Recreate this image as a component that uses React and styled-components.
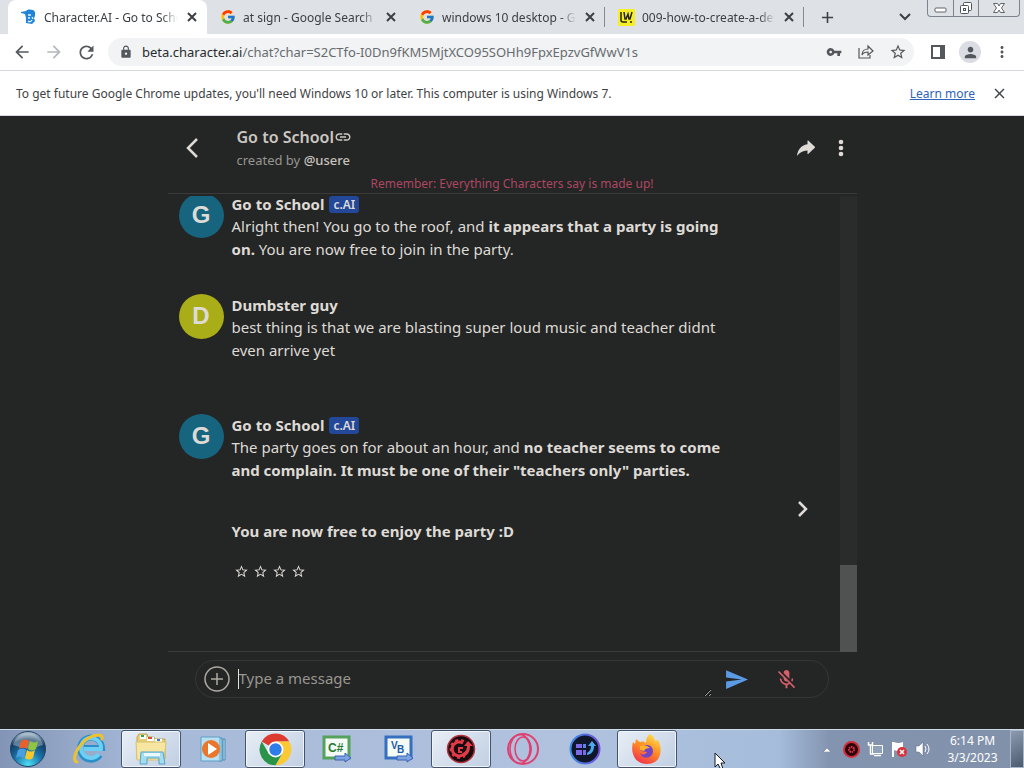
import React from 'react'
import styled, { createGlobalStyle } from 'styled-components'
import { FcGoogle } from 'react-icons/fc'
import {
  MdAdd,
  MdArrowBack,
  MdArrowForward,
  MdClose,
  MdLink,
  MdLock,
  MdMicOff,
  MdMoreVert,
  MdPerson,
  MdRefresh,
  MdSend,
  MdStarBorder,
  MdVpnKey,
} from 'react-icons/md'
import { IoIosShareAlt } from 'react-icons/io'

const GlobalStyle = createGlobalStyle`
  * {
    box-sizing: border-box;
  }
  body {
    margin: 0;
    font-family: 'Noto Sans', 'Open Sans', sans-serif;
    font-size: 12px;
    background: #242525;
  }
  button {
    padding: 0;
    border: 0;
    background: none;
    color: inherit;
    font: inherit;
    cursor: pointer;
  }
  svg {
    display: block;
    flex: none;
  }
`

const tabs = [
  { title: 'Character.AI - Go to School', icon: 'character', active: true },
  { title: 'at sign - Google Search', icon: 'google' },
  { title: 'windows 10 desktop - Google Search', icon: 'google' },
  { title: '009-how-to-create-a-desktop', icon: 'wiki' },
]

const messages = [
  {
    id: 1,
    name: 'Go to School',
    bot: true,
    gap: 33,
    text: [
      <>
        Alright then! You go to the roof, and{' '}
        <b>it appears that a party is going on.</b> You are now free to join in
        the party.
      </>,
    ],
  },
  {
    id: 2,
    name: 'Dumbster guy',
    gap: 52,
    text: [
      'best thing is that we are blasting super loud music and teacher didnt even arrive yet',
    ],
  },
  {
    id: 3,
    name: 'Go to School',
    bot: true,
    rated: true,
    gap: 48,
    text: [
      <>
        The party goes on for about an hour, and{' '}
        <b>
          no teacher seems to come and complain. It must be one of their
          "teachers only" parties.
        </b>
      </>,
      <b>You are now free to enjoy the party :D</b>,
    ],
  },
]

const CharacterIcon = () => (
  <svg width='16' height='16' viewBox='0 0 16 16'>
    <path
      d='M0 3 5 2C7 0 12 0 14 3v4l-1 2 1 3-3 3-6-1V9L4 5 0 4z'
      fill='#2184d8'
    />
    <path
      d='M7 6h3M7 9h2M11 8l1 2M7 12c1 1 3 1 4-1'
      stroke='#e9f5ff'
      strokeWidth='1.3'
      fill='none'
    />
  </svg>
)

const WikiIcon = () => (
  <svg width='17' height='17' viewBox='0 0 17 17'>
    <rect width='17' height='17' rx='1' fill='#f7ee2a' />
    <path
      d='M3 3v8q0 2 2 2h4M6 3l1 7h1l2-5 1 5h1l2-7'
      stroke='#25240c'
      strokeWidth='1.5'
      fill='none'
    />
    <circle cx='13' cy='13' r='1' fill='#25240c' />
  </svg>
)

const favicons = {
  character: <CharacterIcon />,
  google: <FcGoogle size={16} />,
  wiki: <WikiIcon />,
}

const Chevron = ({ points, width, height, weight = 2.5 }) => (
  <svg
    width={width}
    height={height}
    viewBox={`0 0 ${width} ${height}`}
    fill='none'
    stroke='currentColor'
    strokeWidth={weight}
  >
    <path d={points} />
  </svg>
)

const StartIcon = () => (
  <svg width='38' height='38' viewBox='0 0 38 38'>
    <defs>
      <radialGradient id='orb' cx='.5' cy='.95' r='.9'>
        <stop offset='0' stopColor='#4fe0f5' />
        <stop offset='.45' stopColor='#1b74ab' />
        <stop offset='.8' stopColor='#123c62' />
        <stop offset='1' stopColor='#9eb4c8' />
      </radialGradient>
    </defs>
    <circle cx='19' cy='19' r='17.5' fill='url(#orb)' stroke='#26435f' />
    <path d='M4 15a15.5 15.5 0 0 1 30 0q-15 6-30 0z' fill='#fff' opacity='.32' />
    <path d='M12 11q4-3 8 0l-2 8q-4-3-8 0z' fill='#e9602d' />
    <path d='M21 11q4 3 8 0l-2 8q-4 3-8 0z' fill='#8fc53f' />
    <path d='M9 20q5-3 8 0l-2 8q-4-3-8 0z' fill='#4a9fe0' />
    <path d='M18 20q4 3 8 0l-2 8q-4 3-8 0z' fill='#f8c72d' />
  </svg>
)

const ExplorerEIcon = () => (
  <svg width='34' height='34' viewBox='0 0 34 34'>
    <path
      d='M28 23a11 11 0 1 1 2-7H12'
      fill='none'
      stroke='#2b8fc9'
      strokeWidth='6'
    />
    <path
      d='M27 22a10 10 0 1 1 2-5H12'
      fill='none'
      stroke='#6dcff3'
      strokeWidth='4'
    />
    <path
      d='M5 30C-3 28 10 3 27 3q4 0 3 4'
      fill='none'
      stroke='#edc12f'
      strokeWidth='3'
      strokeLinecap='round'
    />
  </svg>
)

const FolderIcon = () => (
  <svg width='34' height='32' viewBox='0 0 34 32'>
    <path d='M3 4 5 1h8l1 3h6l1 2h10v20H3z' fill='#e6cf78' stroke='#bfa653' />
    <path d='M6 2h6v4H6z' fill='#fff' />
    <path d='M7 2h3v2H7z' fill='#36a34b' />
    <path d='M13 4h7v4h-7z' fill='#fff' />
    <path d='M14 4h4v2h-4z' fill='#d84b35' />
    <path d='M21 6h7v3h-7z' fill='#fff' />
    <path d='M23 6h3v2h-3z' fill='#4977c7' />
    <path d='M2 9h30l-2 18H3z' fill='#f6e6a1' stroke='#d9c273' />
    <path d='M7 19h22l2 12h-6v-6H13v6H6z' fill='#a5dcef' stroke='#55a5ca' />
    <path d='M10 20h16v3H10z' fill='#e9f9ff' />
  </svg>
)

const PlayerIcon = () => (
  <svg width='28' height='26' viewBox='0 0 28 26'>
    <path d='M20 2h3v23h-3zM24 3h2v21h-2z' fill='#bde3f5' stroke='#488db5' />
    <path d='M2 1h19v24H2z' fill='#b9dff2' stroke='#5f9fc4' />
    <circle cx='12' cy='13' r='9' fill='#e9762a' />
    <path d='M9 7v12l9-6z' fill='#fff' />
  </svg>
)

const ChromeIcon = () => (
  <svg width='33' height='33' viewBox='0 0 48 48'>
    <path d='M24 24 4 12.5A23 23 0 0 1 44 12.5H24z' fill='#de3b30' />
    <path d='M24 12.5h20A23 23 0 0 1 24 47l10-17.5z' fill='#fcc934' />
    <path d='M24 47A23 23 0 0 1 4 12.5l10 17.3L34 29.5z' fill='#2a9348' />
    <circle cx='24' cy='24' r='11.5' fill='#fff' />
    <circle cx='24' cy='24' r='9' fill='#2f7de8' />
  </svg>
)

const CodeIcon = ({ edge, ink, children }) => (
  <svg width='30' height='28' viewBox='0 0 30 28'>
    <rect x='2' y='2' width='25' height='21' fill='#f4faf5' stroke={edge} strokeWidth='3' />
    <g
      fontFamily='Liberation Sans, sans-serif'
      fontSize='12'
      fontWeight='bold'
      fill={ink}
    >
      {children}
    </g>
    <path d='M13 21h10v-3l6 5-6 4v-2H13z' fill='#7da3e4' stroke='#3c63b0' />
  </svg>
)

const RedGearIcon = () => (
  <svg width='30' height='30' viewBox='0 0 30 30'>
    <circle cx='15' cy='15' r='13.5' fill='#160b0e' stroke='#b3303c' strokeWidth='1.5' />
    <path
      d='M17 9A7 7 0 1 0 18 20'
      fill='none'
      stroke='#e33a48'
      strokeWidth='3'
    />
    <path
      d='M18 7A9 9 0 1 0 19 22'
      fill='none'
      stroke='#e33a48'
      strokeWidth='2'
      strokeDasharray='3 3'
    />
    <path d='M17 14h-4v4h3' fill='none' stroke='#e33a48' strokeWidth='2' />
    <path d='M17 19c3-2 4-4 4-7h-3l4-5 5 5h-3c0 6-2 9-7 11z' fill='#e33a48' />
  </svg>
)

const OperaIcon = () => (
  <svg width='34' height='34' viewBox='0 0 34 34' fill='none' stroke='#e0406f'>
    <circle cx='17' cy='17' r='15' strokeWidth='2' />
    <ellipse cx='14' cy='17' rx='10' ry='14.5' strokeWidth='1.5' />
    <ellipse cx='17' cy='17' rx='8' ry='12' strokeWidth='1.5' />
    <path d='M21 6q8 11 0 22' strokeWidth='1.5' />
  </svg>
)

const BlueAppIcon = () => (
  <svg width='32' height='32' viewBox='0 0 32 32'>
    <defs>
      <linearGradient id='ring' x2='1'>
        <stop offset='0' stopColor='#3c8ee8' />
        <stop offset='1' stopColor='#7252dc' />
      </linearGradient>
    </defs>
    <circle cx='16' cy='16' r='14.5' fill='#10172a' stroke='url(#ring)' strokeWidth='2' />
    <path d='M7 11h6v4H7zM7 17h6v5H7zM14 17h3v5h-3z' fill='#7c69e8' />
    <path d='M14 11h3v4h-3z' fill='#5d84ec' />
    <path d='M18 20c3-2 4-4 4-7h-3l4-5 4 5h-2c0 5-2 8-7 9z' fill='#4ba8ef' />
  </svg>
)

const FirefoxIcon = () => (
  <svg width='32' height='32' viewBox='0 0 32 32'>
    <defs>
      <linearGradient id='fire' x1='.8' y1='0' x2='.3' y2='1'>
        <stop offset='0' stopColor='#ffe34a' />
        <stop offset='.5' stopColor='#ff8b26' />
        <stop offset='1' stopColor='#f0314f' />
      </linearGradient>
    </defs>
    <path
      d='M19 1c4 3 5 5 5 7l3-1c5 8 4 24-11 24C4 31-1 20 2 9l2 2 1-5 4 3c3-1 5 0 6 1 0-4 1-7 4-9z'
      fill='url(#fire)'
    />
    <path d='M10 15c3-5 12-4 12 3 0 8-11 9-13 2 3 3 6 1 7-1l-6-1z' fill='#7444c4' />
    <path d='M9 13q6-2 10 2-5 0-6 3l-4-1z' fill='#ffb02c' />
  </svg>
)

const apps = [
  { name: 'Internet Explorer', icon: <ExplorerEIcon /> },
  { name: 'Windows Explorer', icon: <FolderIcon />, open: true },
  { name: 'Media Player', icon: <PlayerIcon /> },
  { name: 'Chrome', icon: <ChromeIcon />, open: true },
  {
    name: 'Visual C#',
    icon: (
      <CodeIcon edge='#55a25c' ink='#277a34'>
        <text x='6' y='17'>
          C#
        </text>
      </CodeIcon>
    ),
  },
  {
    name: 'Visual Basic',
    icon: (
      <CodeIcon edge='#356fc0' ink='#225aa9'>
        <text x='7' y='14' fontSize='10'>
          V
        </text>
        <text x='13' y='18' fontSize='10'>
          B
        </text>
      </CodeIcon>
    ),
  },
  { name: 'Driver Booster', icon: <RedGearIcon />, open: true },
  { name: 'Opera', icon: <OperaIcon /> },
  { name: 'Software Updater', icon: <BlueAppIcon /> },
  { name: 'Firefox', icon: <FirefoxIcon />, open: true },
]

const TabBar = () => (
  <TabStrip>
    {tabs.map((tab) => (
      <Tab key={tab.title} $active={tab.active}>
        {favicons[tab.icon]}
        <TabTitle>{tab.title}</TabTitle>
        <IconButton aria-label='Close tab'>
          <svg width='14' height='14' stroke='currentColor' strokeWidth='2'>
            <path d='M3 3l8 8M11 3l-8 8' />
          </svg>
        </IconButton>
      </Tab>
    ))}
    <NewTab aria-label='New tab'>
      <MdAdd size={19} />
    </NewTab>
    <TabSearch aria-label='Search tabs'>
      <Chevron width={12} height={8} weight={2} points='M1 1l5 5 5-5' />
    </TabSearch>
    <WindowControls>
      <WindowButton aria-label='Minimize'>
        <svg width='13' height='12' fill='#fff' stroke='#60656b'>
          <rect x='1' y='6' width='11' height='4' rx='1' />
        </svg>
      </WindowButton>
      <WindowButton aria-label='Restore'>
        <svg width='14' height='14' fill='#fff' stroke='#50555b'>
          <rect x='4.5' y='1.5' width='8' height='8' rx='1' />
          <rect x='1.5' y='4.5' width='8' height='8' rx='1' />
          <rect x='4.5' y='7.5' width='2' height='2' />
        </svg>
      </WindowButton>
      <WindowButton aria-label='Close' $wide>
        <svg width='14' height='12' fill='#fff' stroke='#60656b'>
          <path d='M1.5 1.5h4L7 4l1.500-2.500h4L9.500 6l3 4.500h-4L7 8l-1.500 2.500h-4l3-4.500z' />
        </svg>
      </WindowButton>
    </WindowControls>
  </TabStrip>
)

const Toolbar = () => (
  <ToolbarRow>
    <NavButton aria-label='Back'>
      <MdArrowBack size={20} />
    </NavButton>
    <NavButton aria-label='Forward' $dim>
      <MdArrowForward size={20} />
    </NavButton>
    <NavButton aria-label='Reload'>
      <MdRefresh size={21} />
    </NavButton>
    <AddressBar>
      <MdLock size={14} />
      <Address>
        <span>beta.character.ai</span>
        /chat?char=S2CTfo-I0Dn9fKM5MjtXCO95SOHh9FpxEpzvGfWwV1s
      </Address>
      <ToolButton aria-label='Passwords'>
        <MdVpnKey size={16} />
      </ToolButton>
      <ToolButton aria-label='Share page'>
        <svg width='16' height='16' fill='none' stroke='currentColor' strokeWidth='1.2'>
          <path d='M1 4v10h11v-3M4 11c0-4 3-6 6-6V2l5 5-5 4V8c-3 0-5 1-6 3z' />
        </svg>
      </ToolButton>
      <ToolButton aria-label='Bookmark'>
        <MdStarBorder size={18} />
      </ToolButton>
    </AddressBar>
    <NavButton aria-label='Side panel'>
      <svg width='14' height='14'>
        <path d='M0 0h14v14H0zM2 2v10h7V2z' fillRule='evenodd' fill='currentColor' />
      </svg>
    </NavButton>
    <NavButton aria-label='Profile'>
      <Profile>
        <MdPerson size={17} />
      </Profile>
    </NavButton>
    <NavButton aria-label='Menu'>
      <MdMoreVert size={18} />
    </NavButton>
  </ToolbarRow>
)

const Message = ({ name, bot, rated, gap, text }) => (
  <MessageRow $gap={gap}>
    <Avatar $bot={bot}>{name[0]}</Avatar>
    <Bubble>
      <Name>
        {name}
        {bot && <Badge>c.AI</Badge>}
      </Name>
      {text.map((part, i) => (
        <Text key={i}>{part}</Text>
      ))}
      {rated && (
        <Rating>
          {[1, 2, 3, 4].map((n) => (
            <IconButton key={n} aria-label={`Rate ${n}`}>
              <MdStarBorder size={15} />
            </IconButton>
          ))}
        </Rating>
      )}
    </Bubble>
    {rated && (
      <NextButton aria-label='Next answer'>
        <Chevron width={10} height={16} points='M1 1l7 7-7 7' />
      </NextButton>
    )}
  </MessageRow>
)

const Chat = () => (
  <ChatPanel>
    <ChatHeader>
      <HeaderRow>
        <BackButton aria-label='Back to chats'>
          <Chevron width={14} height={20} points='M12 1L3 10l9 9' />
        </BackButton>
        <Heading>
          <Title>
            Go to School <MdLink size={18} />
          </Title>
          <Author>
            created by <b>@usere</b>
          </Author>
        </Heading>
        <IconButton aria-label='Share'>
          <IoIosShareAlt size={24} />
        </IconButton>
        <IconButton aria-label='More'>
          <svg width='6' height='18' fill='currentColor'>
            <circle cx='3' cy='3' r='2.3' />
            <circle cx='3' cy='9' r='2.3' />
            <circle cx='3' cy='15' r='2.3' />
          </svg>
        </IconButton>
      </HeaderRow>
      <Notice>Remember: Everything Characters say is made up!</Notice>
    </ChatHeader>
    <Scroller>
      <List>
        {messages.map((message) => (
          <Message key={message.id} {...message} />
        ))}
      </List>
      <Track>
        <Thumb />
      </Track>
    </Scroller>
    <Composer>
      <AddButton aria-label='Add attachment'>
        <svg width='26' height='26' fill='none' stroke='currentColor' strokeWidth='1.5'>
          <circle cx='13' cy='13' r='12' />
          <path d='M13 7v12M7 13h12' />
        </svg>
      </AddButton>
      <Caret />
      <MessageInput rows={1} placeholder='Type a message' aria-label='Message' />
      <SendButton aria-label='Send' $color='#5b9be6'>
        <MdSend size={25} />
      </SendButton>
      <SendButton aria-label='Microphone off' $color='#d5606b'>
        <MdMicOff size={23} />
      </SendButton>
    </Composer>
  </ChatPanel>
)

const Taskbar = () => (
  <Bar>
    <StartButton aria-label='Start'>
      <StartIcon />
    </StartButton>
    {apps.map((app) => (
      <AppButton key={app.name} aria-label={app.name} $open={app.open}>
        {app.icon}
      </AppButton>
    ))}
    <Tray>
      <TrayButton aria-label='Show hidden icons'>
        <svg width='8' height='5' fill='#fff' stroke='#59677c' strokeWidth='.5'>
          <path d='M0 5l4-4 4 4z' />
        </svg>
      </TrayButton>
      <TrayButton aria-label='Driver status'>
        <svg width='17' height='17'>
          <circle cx='8.5' cy='8.5' r='7.5' fill='#2a060b' stroke='#d22c3a' strokeWidth='2' />
          <circle
            cx='8.5'
            cy='8.5'
            r='2.5'
            fill='none'
            stroke='#e33546'
            strokeWidth='2'
            strokeDasharray='1.5 .7'
          />
        </svg>
      </TrayButton>
      <TrayButton aria-label='Network'>
        <svg width='16' height='16' stroke='#3b4656'>
          <path d='M5.5 4.5h10v8h-10z' fill='#8fa1b9' stroke='#fff' />
          <path d='M7 14.5h7M1.5 1v3h4V1M3.5 4v9H7' fill='none' stroke='#fff' strokeWidth='1.5' />
        </svg>
      </TrayButton>
      <TrayButton aria-label='Action center'>
        <svg width='17' height='17'>
          <path d='M1 1h2v15H1z' fill='#fff' />
          <path d='M3 1q4 2 9 0v8q-5 2-9 0z' fill='#fff' />
          <circle cx='11' cy='11' r='5' fill='#d8333c' />
          <path d='M9 9l4 4M13 9l-4 4' stroke='#fff' strokeWidth='1.5' />
        </svg>
      </TrayButton>
      <TrayButton aria-label='Volume'>
        <svg width='16' height='16' fill='none' stroke='#fff'>
          <path d='M1 5h3l4-4v14l-4-4H1z' fill='#fff' stroke='#59677c' strokeWidth='.5' />
          <path d='M10 5q2 3 0 6M12 3q4 5 0 10' />
        </svg>
      </TrayButton>
      <Clock>
        <span>6:14 PM</span>
        <span>3/3/2023</span>
      </Clock>
      <ShowDesktop aria-label='Show desktop' />
    </Tray>
    <Cursor width='13' height='19' viewBox='0 0 13 19'>
      <path d='M1 1v14l3-3 3 6 2-1-2-6h4z' fill='#fff' stroke='#151a22' />
    </Cursor>
  </Bar>
)

const App = () => {
  return (
    <Page>
      <GlobalStyle />
      <TabBar />
      <Toolbar />
      <InfoBar>
        <span>
          To get future Google Chrome updates, you'll need Windows 10 or later.
          This computer is using Windows 7.
        </span>
        <LearnMore href='#learn'>Learn more</LearnMore>
        <IconButton aria-label='Dismiss'>
          <MdClose size={17} />
        </IconButton>
      </InfoBar>
      <Chat />
      <Taskbar />
    </Page>
  )
}

const Page = styled.div`
  display: flex;
  flex-direction: column;
  height: 100vh;
  min-height: 600px;
`

const IconButton = styled.button`
  display: flex;
  align-items: center;
  justify-content: center;
`

const TabStrip = styled.div`
  display: flex;
  flex: none;
  height: 34px;
  padding-left: 8px;
  background: #dee1e6;
  color: #3c4043;
`

const Tab = styled.div`
  display: flex;
  align-items: center;
  gap: 7px;
  flex: 0 1 199px;
  min-width: 0;
  padding: 0 8px 0 13px;
  border-radius: 8px 8px 0 0;
  background: ${({ $active }) => ($active ? '#fff' : 'transparent')};
  & + &::after {
    content: '';
    width: 1px;
    height: 20px;
    margin-right: -8px;
    background: #858b94;
  }
`

const TabTitle = styled.span`
  flex: 1;
  overflow: hidden;
  white-space: nowrap;
  mask-image: linear-gradient(to right, #000 calc(100% - 16px), transparent);
`

const NewTab = styled(IconButton)`
  width: 46px;
`

const TabSearch = styled(IconButton)`
  width: 26px;
  margin-left: auto;
`

const WindowControls = styled.div`
  display: flex;
  height: 17px;
  margin: 0 4px 0 9px;
  border: 1px solid #7d848d;
  border-top: 0;
  border-radius: 0 0 4px 4px;
`

const WindowButton = styled(IconButton)`
  width: ${({ $wide }) => ($wide ? '41px' : '25px')};
  & + & {
    border-left: 1px solid #7d848d;
  }
`

const ToolbarRow = styled.div`
  display: flex;
  align-items: center;
  flex: none;
  height: 37px;
  padding: 0 6px;
  border-bottom: 1px solid #d5d8dc;
  background: #fff;
`

const NavButton = styled(IconButton)`
  width: 32px;
  height: 32px;
  color: ${({ $dim }) => ($dim ? '#b4b7bb' : '#54585c')};
`

const AddressBar = styled.div`
  display: flex;
  align-items: center;
  flex: 1;
  min-width: 0;
  height: 28px;
  margin: 0 8px 0 6px;
  padding-left: 11px;
  border-radius: 14px;
  background: #f1f3f4;
  color: #54585c;
`

const Address = styled.div`
  flex: 1;
  overflow: hidden;
  padding-left: 9px;
  font-size: 13px;
  white-space: nowrap;
  color: #686c70;
  span {
    color: #292b2e;
  }
`

const ToolButton = styled(IconButton)`
  width: 32px;
`

const Profile = styled.span`
  display: flex;
  align-items: center;
  justify-content: center;
  width: 22px;
  height: 22px;
  border-radius: 50%;
  background: #dadde3;
`

const InfoBar = styled.div`
  display: flex;
  align-items: center;
  flex: none;
  height: 45px;
  padding: 0 16px;
  border-bottom: 1px solid #d5d8dc;
  background: #fff;
  color: #3f4245;
`

const LearnMore = styled.a`
  margin: 0 16px 0 auto;
  color: #2e64ba;
`

const ChatPanel = styled.main`
  display: flex;
  flex-direction: column;
  flex: 1;
  min-height: 0;
  width: 100%;
  max-width: 689px;
  margin: 0 auto;
  color: #dedbd6;
  background: #242525;
`

const ChatHeader = styled.header`
  border-bottom: 1px solid #393b3b;
`

const HeaderRow = styled.div`
  display: flex;
  align-items: center;
  gap: 20px;
  padding: 9px 13px 0 17px;
`

const BackButton = styled(IconButton)`
  width: 14px;
  margin-right: 18px;
`

const Heading = styled.div`
  flex: 1;
`

const Title = styled.h1`
  display: flex;
  align-items: center;
  margin: 0;
  font-size: 16px;
  font-weight: 600;
  line-height: 24px;
  color: #cbc8c2;
`

const Author = styled.div`
  font-size: 13px;
  line-height: 22px;
  color: #979590;
  b {
    font-weight: 500;
    color: #c6c3bd;
  }
`

const Notice = styled.div`
  padding-top: 4px;
  font-size: 12px;
  line-height: 18px;
  text-align: center;
  color: #ad4762;
`

const Scroller = styled.div`
  display: flex;
  flex: 1;
  min-height: 0;
  padding-top: 2px;
  border-bottom: 1px solid #393b3b;
`

const List = styled.div`
  display: flex;
  flex-direction: column;
  justify-content: flex-end;
  flex: 1;
  min-width: 0;
  overflow: hidden;
`

const MessageRow = styled.article`
  display: flex;
  flex: none;
  gap: 8px;
  padding: 0 25px 0 11px;
  margin-bottom: ${({ $gap }) => $gap}px;
`

const Avatar = styled.div`
  display: flex;
  flex: none;
  align-items: center;
  justify-content: center;
  width: 45px;
  height: 45px;
  border-radius: 50%;
  padding-bottom: 2px;
  background: ${({ $bot }) => ($bot ? '#17647e' : '#a9ad18')};
  font: bold 24px 'Liberation Sans', sans-serif;
`

const Bubble = styled.div`
  flex: 0 1 504px;
`

const Name = styled.div`
  display: flex;
  align-items: center;
  gap: 5px;
  font-size: 15px;
  font-weight: 700;
  line-height: 22px;
`

const Badge = styled.span`
  padding: 0 4px;
  border-radius: 3px;
  background: #23489a;
  font-size: 12px;
  font-weight: 600;
  line-height: 17px;
`

const Text = styled.p`
  margin: 0;
  font-size: 15px;
  line-height: 23px;
  & + & {
    margin-top: 38px;
  }
`

const Rating = styled.div`
  display: flex;
  gap: 4px;
  padding: 21px 0 24px 2px;
`

const NextButton = styled(IconButton)`
  width: 24px;
  margin-left: auto;
`

const Track = styled.div`
  display: flex;
  flex-direction: column;
  justify-content: flex-end;
  width: 17px;
  margin-bottom: -1px;
  background: #2a2b2b;
`

const Thumb = styled.div`
  height: 19%;
  background: #505151;
`

const Composer = styled.form`
  display: flex;
  align-items: center;
  height: 38px;
  margin: 8px 28px 31px 27px;
  border: 1px solid #353737;
  border-radius: 19px;
`

const AddButton = styled(IconButton).attrs({ type: 'button' })`
  width: 26px;
  margin: 0 8px;
  color: #aeaaa2;
`

const Caret = styled.span`
  width: 1px;
  height: 20px;
  background: #e4e2de;
`

const MessageInput = styled.textarea`
  flex: 1;
  min-width: 0;
  height: 36px;
  padding: 6px 0;
  border: 0;
  outline: 0;
  background: transparent;
  color: #dedbd6;
  color-scheme: dark;
  font: 15px/22px 'Noto Sans', sans-serif;
  resize: vertical;
  &::placeholder {
    color: #99968f;
  }
`

const SendButton = styled(IconButton).attrs({ type: 'button' })`
  width: 50px;
  color: ${({ $color }) => $color};
  &:last-child {
    margin-right: 16px;
  }
`

const Bar = styled.footer`
  position: relative;
  display: flex;
  flex: none;
  gap: 2px;
  height: 39px;
  border-top: 1px solid #cfdae8;
  background: linear-gradient(
    to right,
    #8295b6,
    #a6b9d8 14%,
    #b0c2de 55%,
    #a5bddb 76%,
    #8394b0 81%,
    #8291aa
  );
`

const StartButton = styled(IconButton)`
  width: 55px;
  margin-right: 2px;
`

const AppButton = styled(IconButton)`
  width: 60px;
  border: 1px solid ${({ $open }) => ($open ? '#46546b' : 'transparent')};
  border-radius: 3px;
  background: ${({ $open }) =>
    $open ? 'linear-gradient(135deg, #e8eef6, #c0cfe3)' : 'none'};
  box-shadow: ${({ $open }) => ($open ? 'inset 0 0 0 1px #eff5fb' : 'none')};
`

const Tray = styled.div`
  display: flex;
  align-items: center;
  margin-left: auto;
`

const TrayButton = styled(IconButton)`
  width: 24px;
`

const Clock = styled.time`
  display: flex;
  flex-direction: column;
  align-items: center;
  width: 75px;
  font-size: 12px;
  line-height: 17px;
  color: #fff;
`

const ShowDesktop = styled.button`
  align-self: stretch;
  width: 14px;
  border: 1px solid #a9b6c8;
  background: linear-gradient(150deg, #8d9bb0, #4c5a70);
`

const Cursor = styled.svg`
  position: absolute;
  left: 714px;
  top: 22px;
`

export default App
